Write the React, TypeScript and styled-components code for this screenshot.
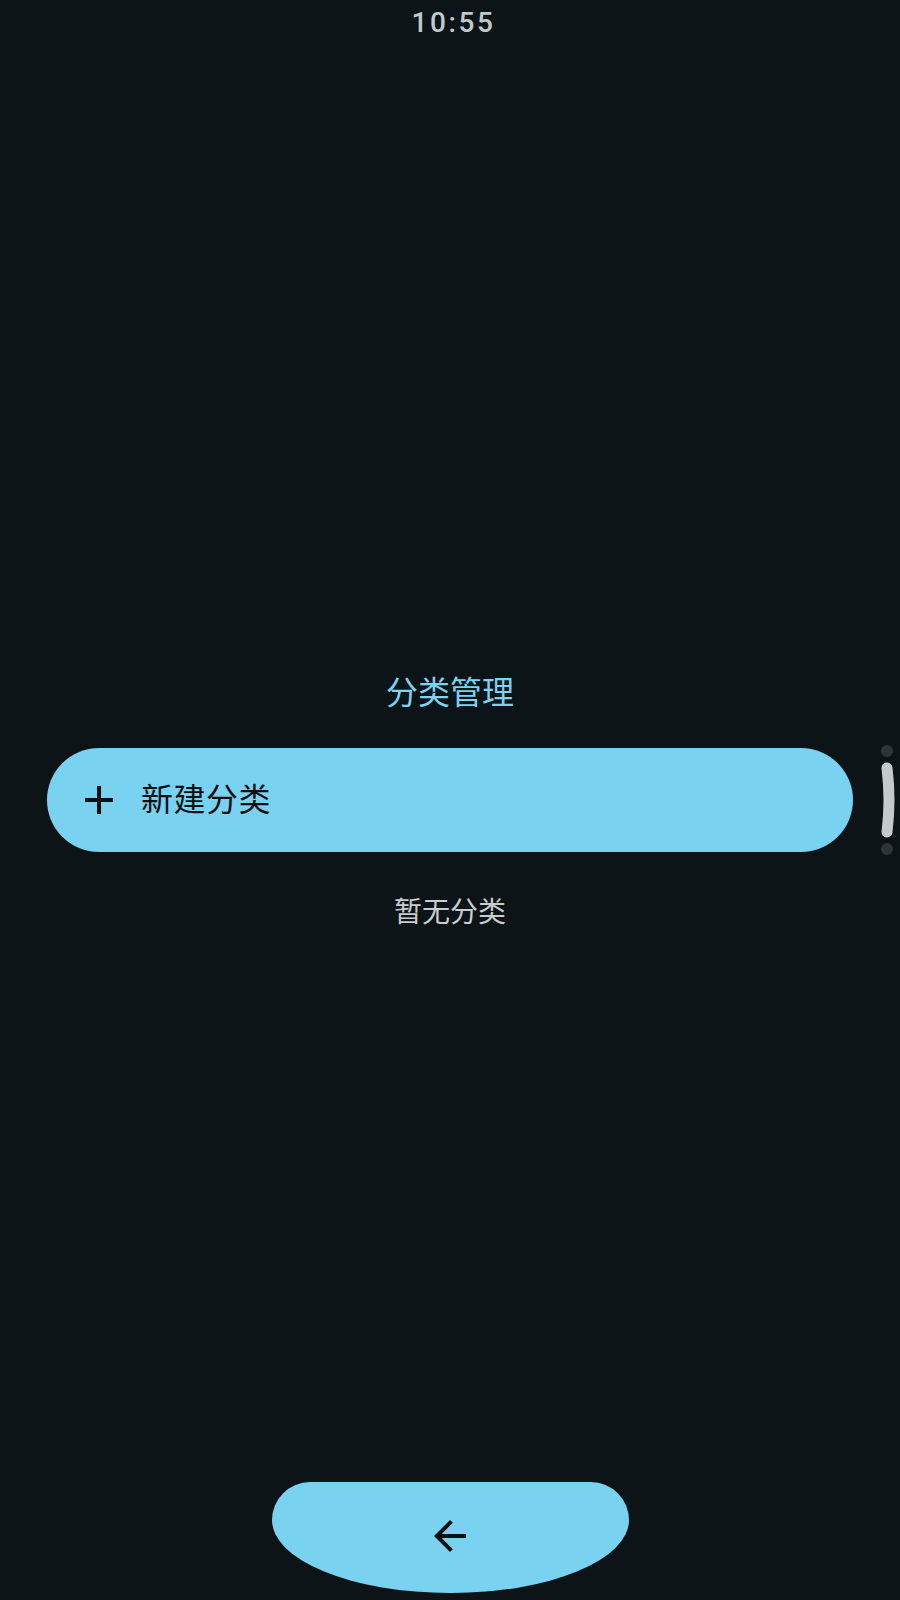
import React from "react";
import styled, { createGlobalStyle } from "styled-components";
import { MdAdd, MdArrowBack } from "react-icons/md";

const GlobalStyle = createGlobalStyle`
  html, body {
    margin: 0;
    padding: 0;
    background: #0c1417;
  }
  body {
    font-family: "Noto Sans CJK SC", "Noto Sans", Roboto, sans-serif;
  }
`;

const Screen = styled.div`
  position: relative;
  display: flex;
  flex-direction: column;
  width: 900px;
  height: 1600px;
  overflow: hidden;
  background: #0c1417;
`;

const StatusBar = styled.div`
  height: 44px;
  display: flex;
  align-items: center;
  justify-content: center;
  padding-left: 7px;
  font-family: Roboto, "Liberation Sans", sans-serif;
  font-size: 28px;
  font-weight: 500;
  letter-spacing: 2.6px;
  color: #c3c8cb;
`;

const Main = styled.main`
  margin-top: 626px;
  display: flex;
  flex-direction: column;
  align-items: center;
  gap: 40px;
`;

const Title = styled.h1`
  margin: 0;
  font-size: 32px;
  line-height: 40px;
  font-weight: 400;
  color: #7dd3f0;
`;

const ChipButton = styled.button`
  box-sizing: border-box;
  width: 806px;
  height: 104px;
  margin-top: -2px;
  border: none;
  border-radius: 52px;
  background: #7ad2f1;
  display: flex;
  align-items: center;
  gap: 18px;
  padding: 0 0 0 28px;
  font-family: inherit;
  font-size: 32px;
  color: #0a0f11;
  cursor: pointer;
`;

const ChipLabel = styled.span`
  line-height: 40px;
  padding-bottom: 6px;
  letter-spacing: 0.5px;
`;

const EmptyText = styled.p`
  margin: 0;
  font-size: 28px;
  line-height: 36px;
  color: #c9cdcf;
`;

const Spacer = styled.div`
  flex: 1;
`;

const BackButton = styled.button`
  align-self: center;
  width: 357px;
  height: 111px;
  margin-bottom: 7px;
  border: none;
  background: #7ad2f1;
  border-radius: 38px 38px 178px 178px / 38px 38px 73px 73px;
  display: flex;
  align-items: center;
  justify-content: center;
  padding: 0 0 3px;
  color: #0a0f11;
  cursor: pointer;
`;

const ScrollIndicator = styled.svg`
  position: absolute;
  left: 876px;
  top: 740px;
`;

export default function App() {
  return (
    <>
      <GlobalStyle />
      <Screen>
        <StatusBar>10:55</StatusBar>
        <Main>
          <Title>分类管理</Title>
          <ChipButton>
            <MdAdd size={48} />
            <ChipLabel>新建分类</ChipLabel>
          </ChipButton>
          <EmptyText>暂无分类</EmptyText>
        </Main>
        <Spacer />
        <BackButton aria-label="返回">
          <MdArrowBack size={48} />
        </BackButton>
        <ScrollIndicator width="24" height="120" viewBox="0 0 24 120">
          <circle cx="11" cy="11" r="6" fill="#2e3437" />
          <path
            d="M 11 28 Q 15 60 11 92"
            stroke="#c4c9cc"
            strokeWidth="11"
            strokeLinecap="round"
            fill="none"
          />
          <circle cx="11" cy="109" r="6" fill="#2e3437" />
        </ScrollIndicator>
      </Screen>
    </>
  );
}
